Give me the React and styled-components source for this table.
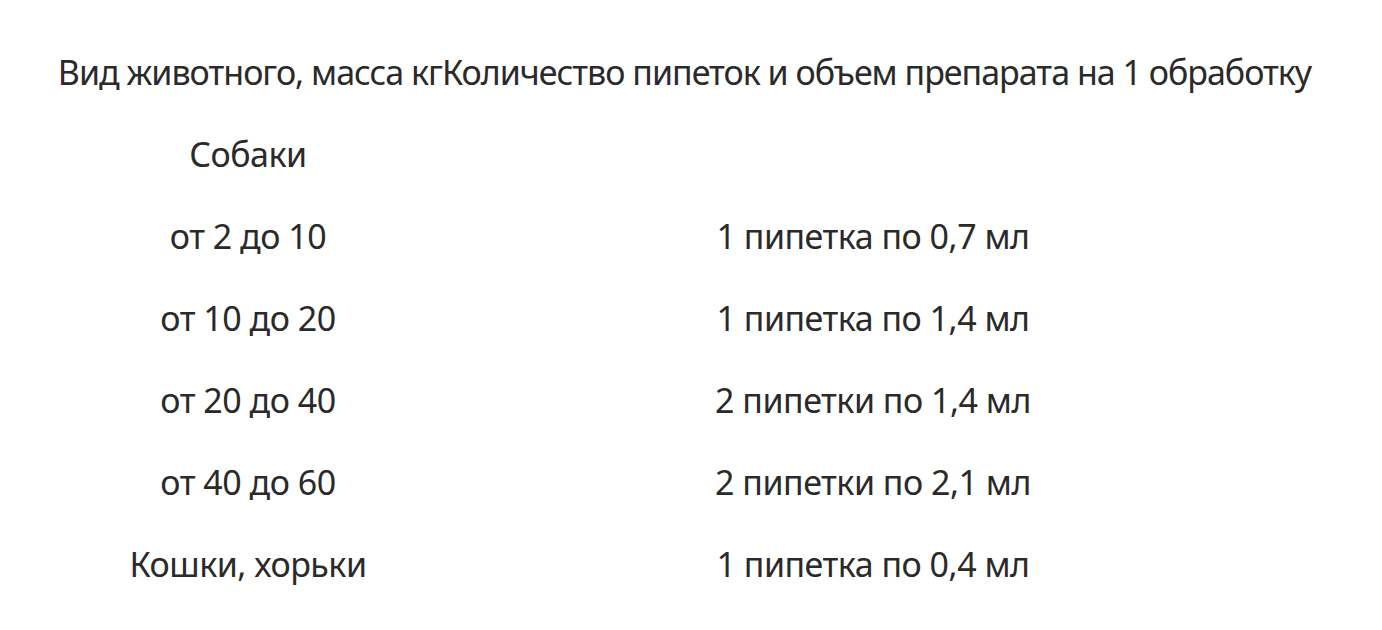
import React from 'react';
import styled, { createGlobalStyle } from 'styled-components';

const Global = createGlobalStyle`
  html, body {
    margin: 0;
    padding: 0;
    background: #fff;
  }
  body {
    font-family: "Noto Sans", "Open Sans", sans-serif;
    color: #2a2a2a;
  }
`;

const Table = styled.div`
  width: 1382px;
  padding-top: 48px;
`;

const Head = styled.div`
  text-align: center;
  font-size: 34px;
  letter-spacing: -1px;
  line-height: 48px;
  height: 82px;
  padding-right: 13px;
  white-space: nowrap;
`;

const Row = styled.div`
  display: grid;
  grid-template-columns: 496px 754px;
  height: 82px;
  align-items: start;
`;

const Cell = styled.div`
  text-align: center;
  font-size: 34px;
  letter-spacing: -0.5px;
  line-height: 48px;
  white-space: nowrap;
`;

const rows = [
  ['Собаки', ''],
  ['от 2 до 10', '1 пипетка по 0,7 мл'],
  ['от 10 до 20', '1 пипетка по 1,4 мл'],
  ['от 20 до 40', '2 пипетки по 1,4 мл'],
  ['от 40 до 60', '2 пипетки по 2,1 мл'],
  ['Кошки, хорьки', '1 пипетка по 0,4 мл'],
];

export default function App() {
  return (
    <>
      <Global />
      <Table>
        <Head>
          <span>Вид животного, масса кг</span>
          <span>Количество пипеток и объем препарата на 1 обработку</span>
        </Head>
        {rows.map((r, i) => (
          <Row key={i}>
            <Cell>{r[0]}</Cell>
            <Cell>{r[1]}</Cell>
          </Row>
        ))}
      </Table>
    </>
  );
}
